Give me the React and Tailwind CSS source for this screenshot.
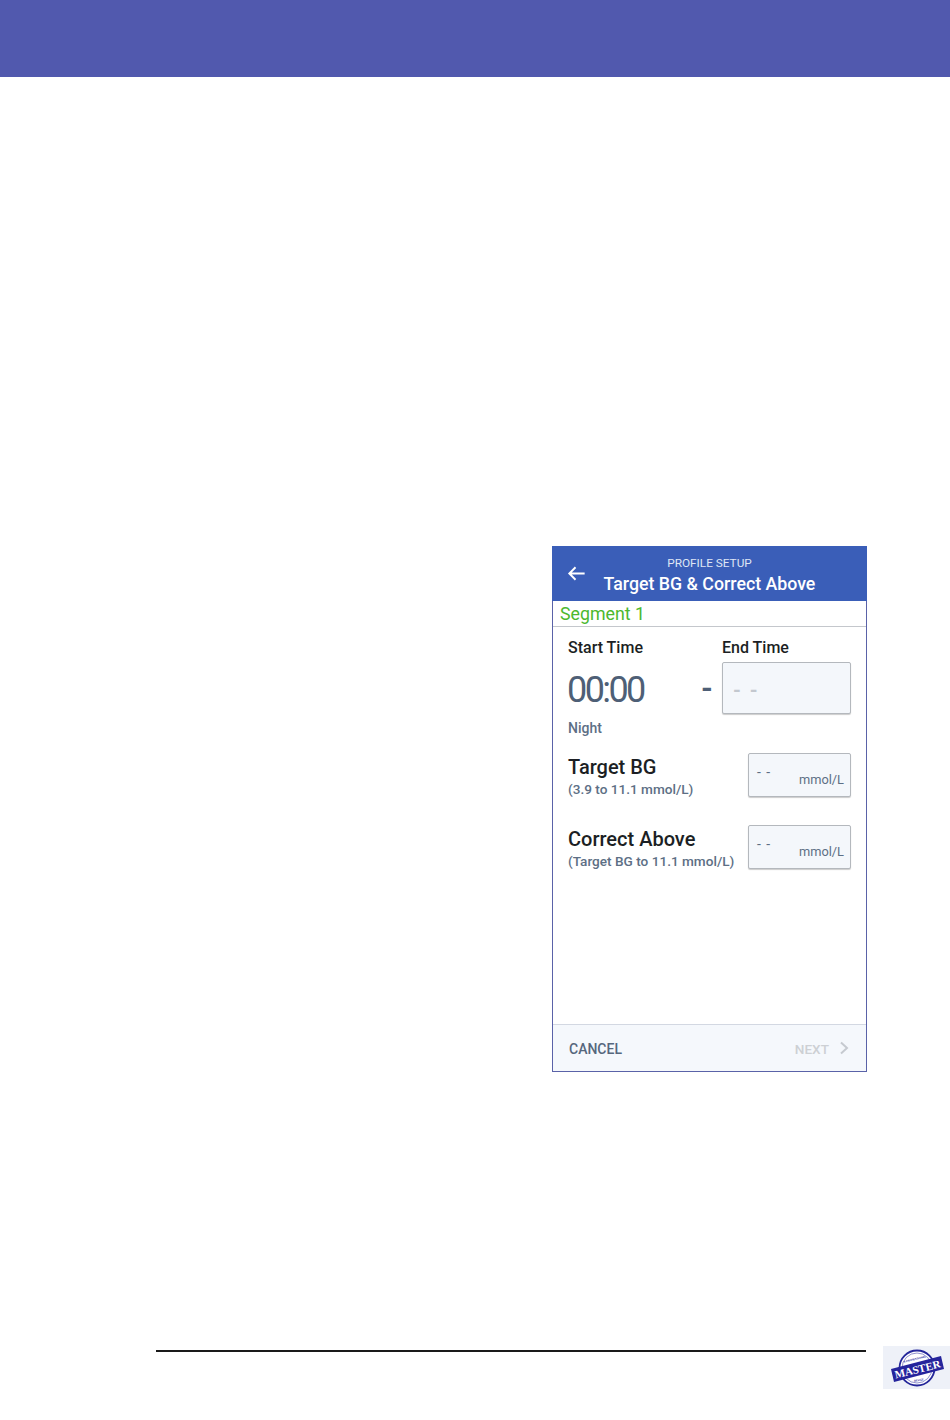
import React from "react";

function Field({ title, sub }) {
  return (
    <div className="flex items-start justify-between pl-[15px] pr-[15px]">
      <div className="pt-[2px]">
        <div className="text-[20px] leading-[24px] font-medium text-[#1c1f24]">{title}</div>
        <div className="text-[13.6px] leading-[18px] mt-[1px] font-medium text-[#5d6f85]">{sub}</div>
      </div>
      <div className="relative w-[103px] h-[44px] bg-[#f4f7fb] border border-[#b4b8bd] rounded-[2px] shadow-[0_1px_1px_rgba(0,0,0,0.2)] text-[#5d6f85]">
        <span className="absolute left-[8px] top-[9px] text-[14px] leading-[18px] tracking-[1px]">- -</span>
        <span className="absolute right-[6px] top-[17px] text-[12.8px] leading-[18px]">mmol/L</span>
      </div>
    </div>
  );
}

function Logo() {
  return (
    <svg viewBox="0 0 67 43" className="w-[67px] h-[43px] bg-[#eef1f8]">
      <circle cx="34" cy="22" r="17.5" fill="#ffffff" stroke="#25279a" strokeWidth="1.8" />
      <circle cx="34" cy="22" r="15" fill="none" stroke="#25279a" strokeWidth="0.5" />
      <polygon points="8,23 58,10 61,23 11,36" fill="#25249c" />
      <text
        x="34.5"
        y="27"
        textAnchor="middle"
        transform="rotate(-14 34.5 23)"
        fontFamily="'Liberation Serif', serif"
        fontWeight="700"
        fontSize="11"
        fill="#ffffff"
      >
        MASTER
      </text>
      <text x="32" y="14" textAnchor="middle" transform="rotate(-14 32 14)" fontFamily="'Liberation Sans', sans-serif" fontWeight="700" fontSize="2.6" fill="#25279a">
        A PROFESSIONAL
      </text>
      <text x="36" y="35" textAnchor="middle" transform="rotate(-8 36 35)" fontFamily="'Liberation Sans', sans-serif" fontWeight="700" fontSize="2.6" fill="#25279a">
        DEVICE
      </text>
    </svg>
  );
}

export default function App() {
  return (
    <div className="w-[950px] h-[1420px] bg-white overflow-hidden font-['Roboto',sans-serif]">
      <div className="h-[77px] bg-[#5159ae]" />
      <div className="ml-[552px] mt-[469px] w-[315px] h-[526px] flex flex-col border border-[#5a62a8] border-t-0 bg-white">
        <div className="relative h-[55px] -mx-px shrink-0 bg-[#3a5eb8] text-white text-center">
          <svg viewBox="0 0 24 24" className="absolute left-[13px] top-[16px] w-[23px] h-[23px]" fill="none" stroke="#ffffff" strokeWidth="2">
            <path d="M20.5 12H4.5M11 5.5L4.5 12l6.5 6.5" />
          </svg>
          <div className="pt-[10px] text-[11.8px] leading-[14px] text-[#dfe6f5]">PROFILE SETUP</div>
          <div className="mt-[3px] text-[17.75px] leading-[22px] font-medium">Target BG &amp; Correct Above</div>
        </div>
        <div className="h-[26px] shrink-0 border-b border-[#c4c7cc] pl-[7px] text-[17.8px] leading-[26px] text-[#4cb82e]">Segment 1</div>

        <div className="flex pl-[15px] pt-[11px]">
          <div className="w-[154px] text-[16px] leading-[20px] font-medium text-[#1c1f24]">Start Time</div>
          <div className="text-[16px] leading-[20px] font-medium text-[#1c1f24]">End Time</div>
        </div>
        <div className="flex items-start pl-[15px] pt-[4px]">
          <div className="w-[134px] -ml-px pt-[6px] text-[36px] leading-[44px] tracking-[-2.6px] text-[#4e5f76]">00:00</div>
          <div className="w-[21px] pt-[8px] text-[30px] leading-[36px] font-bold text-[#4e5f76]">-</div>
          <div className="w-[129px] h-[52px] bg-[#f4f7fb] border border-[#b4b8bd] rounded-[2px] shadow-[0_1px_1px_rgba(0,0,0,0.2)] pl-[10px] text-[20px] leading-[54px] tracking-[2px] font-bold text-[#c3c8cf]">- -</div>
        </div>
        <div className="pl-[15px] mt-[5px] text-[14px] leading-[18px] font-medium text-[#5d6f85]">Night</div>

        <div className="mt-[16px]">
          <Field title="Target BG" sub="(3.9 to 11.1 mmol/L)" />
        </div>
        <div className="mt-[27px]">
          <Field title="Correct Above" sub="(Target BG to 11.1 mmol/L)" />
        </div>

        <div className="mt-auto h-[47px] shrink-0 border-t border-[#d3d8e2] bg-[#f5f8fc] flex items-center justify-between pt-[2px] pl-[16px] pr-[16px]">
          <span className="text-[14px] font-medium text-[#56677d]">CANCEL</span>
          <span className="flex items-center gap-[9px] text-[13.6px] font-medium text-[#cdd0d4]">
            NEXT
            <svg viewBox="0 0 12 16" className="w-[12px] h-[16px] -mt-[2px]" fill="none" stroke="#c6cad0" strokeWidth="2">
              <path d="M3 2.5L9 8l-6 5.5" />
            </svg>
          </span>
        </div>
      </div>

      <div className="mt-[274px] ml-[156px] flex items-start">
        <div className="w-[710px] h-[2px] mt-[4px] bg-[#1a1a1a]" />
        <div className="ml-[17px]">
          <Logo />
        </div>
      </div>
    </div>
  );
}
